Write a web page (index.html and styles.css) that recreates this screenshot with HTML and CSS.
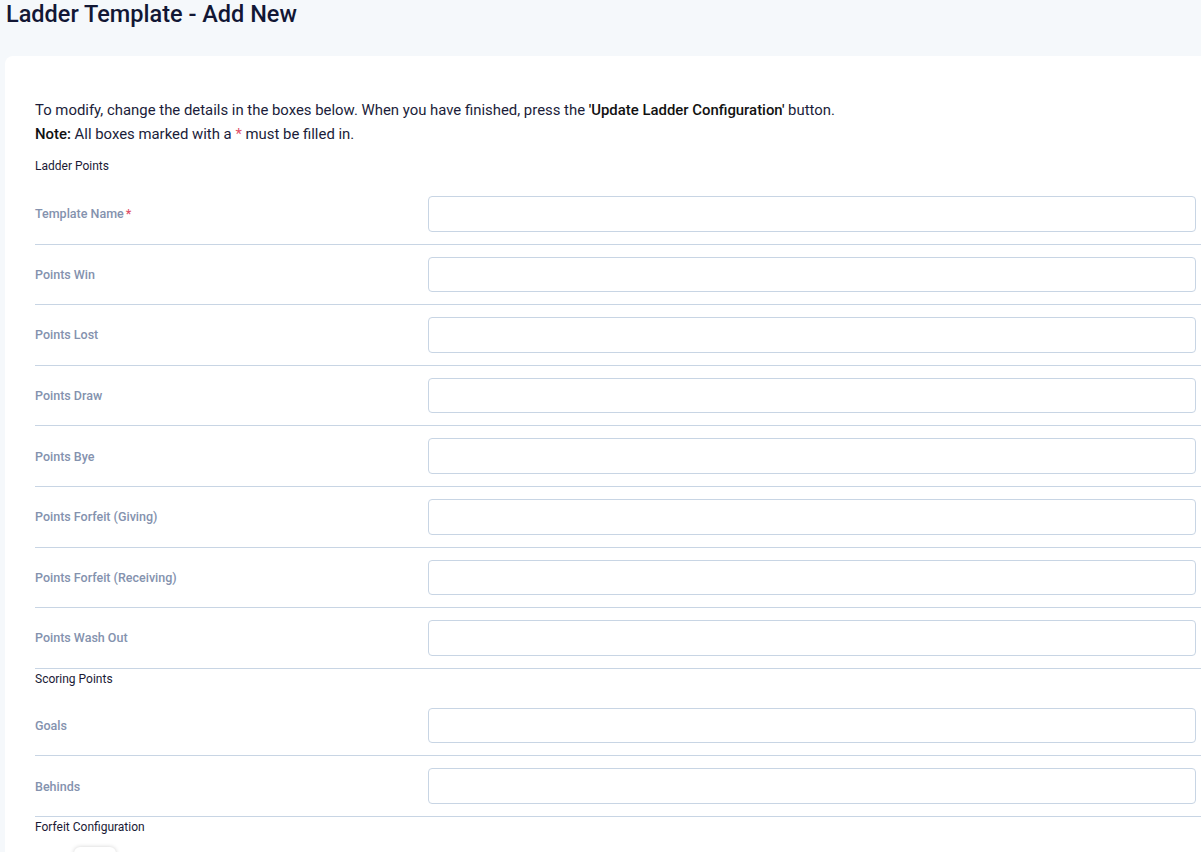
FILE: index.html
```
<!DOCTYPE html>
<html>
<head>
    <meta charset="UTF-8">
    <meta name="viewport" content="width=device-width, initial-scale=1.0">
    <title>Ladder Template - Add New</title>
    <link rel="stylesheet" href="styles.css">
</head>
<body>
    <h1 class="page-title">Ladder Template - Add New</h1>

    <div class="card">
        <p class="intro">To modify, change the details in the boxes below. When you have finished, press the <b>'Update Ladder Configuration'</b> button.</p>
        <p class="intro"><b>Note:</b> All boxes marked with a <span class="req">*</span> must be filled in.</p>

        <!-- Ladder points -->
        <div class="group-title">Ladder Points</div>
        <div class="form-row">
            <label>Template Name<span class="req">*</span></label>
            <input type="text">
        </div>
        <div class="form-row">
            <label>Points Win</label>
            <input type="text">
        </div>
        <div class="form-row">
            <label>Points Lost</label>
            <input type="text">
        </div>
        <div class="form-row">
            <label>Points Draw</label>
            <input type="text">
        </div>
        <div class="form-row">
            <label>Points Bye</label>
            <input type="text">
        </div>
        <div class="form-row">
            <label>Points Forfeit (Giving)</label>
            <input type="text">
        </div>
        <div class="form-row">
            <label>Points Forfeit (Receiving)</label>
            <input type="text">
        </div>
        <div class="form-row">
            <label>Points Wash Out</label>
            <input type="text">
        </div>

        <!-- Scoring points -->
        <div class="group-title">Scoring Points</div>
        <div class="form-row">
            <label>Goals</label>
            <input type="text">
        </div>
        <div class="form-row">
            <label>Behinds</label>
            <input type="text">
        </div>

        <!-- Forfeit -->
        <div class="group-title">Forfeit Configuration</div>
        <div class="toggle-row">
            <span class="toggle"></span>
        </div>
    </div>
</body>
</html>
```

FILE: styles.css
```
html, body {
    overflow: hidden;
}
body {
    font-family: Roboto, "Noto Sans", sans-serif;
    margin: 0;
    background-color: #f5f8fb;
    color: #16193a;
}
.page-title {
    margin: 0;
    padding: 0 6px;
    font-size: 23.5px;
    line-height: 28px;
    font-weight: 500;
    color: #121735;
}
.card {
    margin: 28px 0 0 5px;
    width: 1200px;
    background: white;
    border-radius: 8px 0 0 0;
    padding: 42px 0 0 30px;
    box-sizing: border-box;
    min-height: 800px;
}
.intro {
    margin: 0;
    font-size: 14.9px;
    line-height: 24px;
    color: #1b1d3a;
}
.intro b {
    font-weight: 500;
    color: #111;
}
.req {
    color: #e0506a;
}
label .req {
    margin-left: 2px;
}
.group-title {
    font-size: 12px;
    line-height: 20px;
    color: #1a1a35;
    margin-bottom: 7px;
}
.intro + .group-title {
    margin-top: 10px;
    margin-bottom: 8px;
}
.form-row {
    display: flex;
    align-items: center;
    padding: 12px 9px 12px 0;
    border-bottom: 1px solid #c8d5e4;
}
.form-row label {
    width: 393px;
    flex-shrink: 0;
    font-size: 12.5px;
    font-weight: 500;
    color: #8492ae;
}
.form-row input {
    flex: 1;
    height: 35.6px;
    border: 1px solid #c8d5e4;
    border-radius: 4px;
    box-sizing: border-box;
    font-size: 14px;
    padding: 6px 10px;
}
.toggle-row {
    padding: 3px 0 0 39px;
}
.toggle {
    display: block;
    width: 42px;
    height: 22px;
    background: white;
    border-radius: 6px;
    box-shadow: 0 0 4px rgba(0, 0, 0, 0.18);
}
```
